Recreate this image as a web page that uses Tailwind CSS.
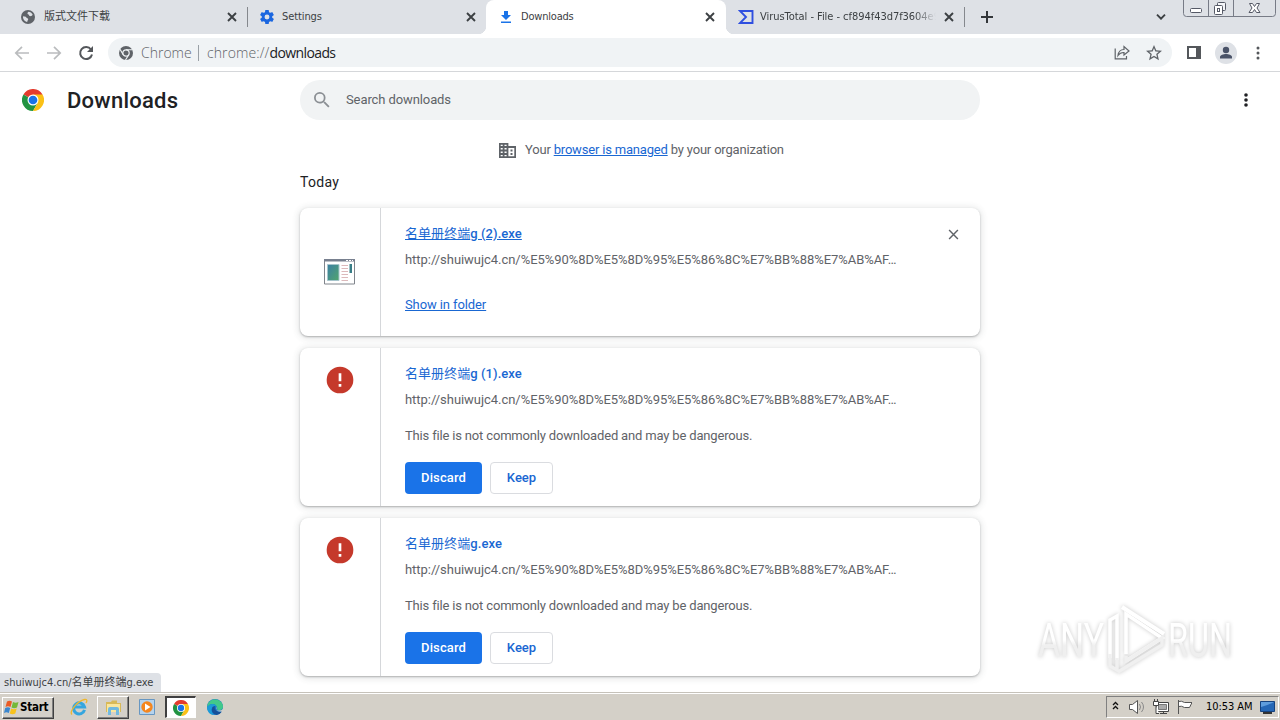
<!DOCTYPE html>
<html lang="en">
<head>
<meta charset="utf-8">
<title>Downloads</title>
<script src="https://cdn.jsdelivr.net/npm/@tailwindcss/browser@4"></script>
</head>
<body class="w-[1280px] h-[720px] overflow-hidden flex flex-col bg-white text-[#5f6368] font-['Roboto','Noto_Sans_CJK_SC',sans-serif]">
<svg width="0" height="0" class="absolute">
  <defs>
    <symbol id="x" viewBox="0 0 10 10"><path d="M1 1L9 9M9 1L1 9" fill="none" stroke="currentColor"/></symbol>
    <symbol id="chrome" viewBox="0 0 48 48">
      <path d="M24 24 3.2 12A24 24 0 0 1 44.8 12Z" fill="#e33b2e"/>
      <path d="M24 24 3.2 12A24 24 0 0 0 24 48L34.4 30Z" fill="#229342"/>
      <path d="M24 12H44.8A24 24 0 0 1 24 48L34.4 30Z" fill="#fbc116"/>
      <circle cx="24" cy="24" r="12" fill="#fff"/><circle cx="24" cy="24" r="9.5" fill="#1a73e8"/>
    </symbol>
    <symbol id="alert" viewBox="0 0 24 24"><path fill="#c5392b" d="M12 2a10 10 0 1 0 0 20 10 10 0 0 0 0-20Z"/><path fill="#fff" d="M11 7h2v6h-2zM11 15h2v2h-2z"/></symbol>
  </defs>
</svg>

<!-- Tab strip -->
<header class="h-[34px] shrink-0 bg-[#dee1e6] flex text-[11px] text-[#3c4043] font-['DejaVu_Sans_Condensed','Noto_Sans_CJK_SC',sans-serif]">
  <div class="w-[248px] h-full flex items-center pl-[21px] pr-[0px]">
    <svg class="size-[14px] shrink-0" viewBox="0 0 14 14"><circle cx="7" cy="7" r="7" fill="#5f6368"/><path d="M2 6.2c1.6.2 3 .2 3.400 1.300.3.9 1.600.5 1.800 1.500.2.9-.9 1.300-1 3-2.500-.5-4.500-2.800-4.200-5.800ZM7.500 1.800c1.700.1 3.300 1.200 4.200 3-.6 1-1.700 1.600-3 1.200-.8-.3-.4-1.200-1.300-1.500C6 4 6.200 2.500 7.500 1.800Z" fill="#dee1e6"/></svg>
    <span class="ml-[9px] flex-1 pt-[1px]">版式文件下载</span>
    <svg class="size-[10px] mr-[10px] stroke-[1.900]"><use href="#x"/></svg>
    <span class="w-px h-[20px] bg-[#85888d]"></span>
  </div>
  <div class="w-[238px] h-full flex items-center pl-[12px] rounded-br-lg">
    <svg class="size-[14px] shrink-0" viewBox="2 2 20 20" fill="#1a66e0"><path d="M19.430 12.980c.04-.32.070-.64.070-.98s-.03-.66-.07-.98l2.110-1.650c.19-.15.240-.42.120-.64l-2-3.460c-.12-.22-.39-.3-.61-.22l-2.490 1c-.52-.4-1.080-.73-1.690-.98l-.38-2.650C14.460 2.180 14.250 2 14 2h-4c-.25 0-.46.180-.49.420l-.38 2.650c-.61.250-1.170.59-1.690.98l-2.490-1c-.23-.09-.49 0-.61.220l-2 3.460c-.13.220-.07.490.12.640l2.110 1.650c-.04.320-.07.650-.07.980s.03.660.07.980l-2.110 1.650c-.19.150-.24.420-.12.640l2 3.460c.12.220.39.300.61.220l2.490-1c.52.400 1.080.73 1.690.98l.38 2.650c.03.240.24.420.49.420h4c.25 0 .46-.18.490-.42l.38-2.650c.61-.25 1.170-.59 1.690-.98l2.490 1c.23.090.49 0 .61-.22l2-3.460c.12-.22.070-.49-.12-.64zM12 15.500a3.500 3.500 0 1 1 0-7 3.500 3.500 0 0 1 0 7Z"/></svg>
    <span class="ml-[8px] flex-1 tracking-[-.1px] pt-[1px]">Settings</span>
    <svg class="size-[10px] mr-[10px] stroke-[1.900]"><use href="#x"/></svg>
  </div>
  <div class="bg-white">
    <div class="w-[240px] h-full flex items-center pl-[14px] bg-white rounded-t-lg relative before:absolute before:-left-2 before:bottom-0 before:size-2 before:bg-[radial-gradient(circle_at_0_0,#dee1e6_8px,#fff_8.500px)] after:absolute after:-right-2 after:bottom-0 after:size-2 after:bg-[radial-gradient(circle_at_100%_0,#dee1e6_8px,#fff_8.500px)] shadow-[0_-8px_0_0_#dee1e6]">
      <svg class="w-[12px] h-[14px] shrink-0" viewBox="0 0 12 14" fill="#1a73e8"><path d="M4 1h4v4h3L6 10 1 5h3zM1 11.500h10V13H1z"/></svg>
      <span class="ml-[9px] flex-1 tracking-[-.2px] pt-[1px]">Downloads</span>
      <svg class="size-[10px] mr-[11px] stroke-[1.900]"><use href="#x"/></svg>
    </div>
  </div>
  <div class="w-[239px] h-full flex items-center pl-[12px]">
    <svg class="w-[16px] h-[14px] shrink-0" viewBox="0 0 15 14" fill="none" stroke="#2f4fe0" stroke-width="1.900"><path d="M1.500 1H14V13H1.500L7.500 7Z"/></svg>
    <span class="ml-[6px] w-[176px] pt-[1px] whitespace-nowrap tracking-[-.04px] [mask-image:linear-gradient(to_right,#000_154px,transparent_176px)]">VirusTotal - File - cf894f43d7f3604e9</span>
    <svg class="size-[10px] ml-[8px] mr-[10px] stroke-[1.900] shrink-0"><use href="#x"/></svg>
    <span class="w-px h-[20px] bg-[#85888d]"></span>
  </div>
  <svg class="size-[12px] ml-[16px] mt-[11px]" viewBox="0 0 12 12" stroke="#33363a" stroke-width="2"><path d="M6 0V12M0 6H12"/></svg>
  <svg class="w-[10px] h-[6px] ml-[163px] mt-[14px]" viewBox="0 0 10 6" fill="none" stroke="#3c4043" stroke-width="1.900"><path d="M1 .7 5 4.700 9 .7"/></svg>
  <svg class="w-[93px] h-[17px] ml-[17px]" viewBox="0 0 93 17" fill="none" stroke="#777b86">
    <path d="M.5 0V13.500Q.5 16.500 3.500 16.500H89.500Q92.500 16.500 92.500 13.500V0M25.500 0V16M50.500 0V16"/>
    <g stroke="#555966"><rect x="7.500" y="8.500" width="11" height="4" rx="1" fill="#fff"/><rect x="34.500" y="2.500" width="8" height="8" rx="1" fill="#f4f5f8"/><rect x="31.500" y="5.500" width="8" height="9" rx="1" fill="#fff"/><rect x="34.500" y="8.500" width="2" height="3"/><path fill="#fff" d="M66.500 3.500h3l2 3 2-3h3L74 8l3 4.500h-3.500l-2-3-2 3h-3.500l3-4.500z"/></g>
  </svg>
</header>

<!-- Toolbar -->
<div class="h-[38px] shrink-0 border-b border-[#d5d7da] flex items-center pl-[14px]">
  <svg class="w-[80px] h-[16px] shrink-0" viewBox="0 0 80 16" fill="none" stroke-width="1.700"><path stroke="#babcbe" d="M15 8H2M8 1.800 1.800 8 8 14.200M33 8H46M40 1.800 46.200 8 40 14.200"/><path stroke="#54575b" stroke-width="2" d="M77 4.500A6 6 0 1 0 78 9.500"/><path fill="#54575b" d="M79 1V7H73z"/></svg>
  <div class="w-[1064px] h-[29px] ml-[14px] shrink-0 rounded-full bg-[#f0f3f5] flex items-center pl-[11px] text-[14px] font-['Open_Sans','Noto_Sans',sans-serif] font-light">
    <svg class="size-[14px]" viewBox="0 0 14 14"><circle cx="7" cy="7" r="7" fill="#5f6368"/><circle cx="7" cy="7" r="3.200" fill="#5f6368" stroke="#f0f3f5" stroke-width="1.200"/><path d="M7 3.700H13.500M4.200 8.600 1 3.200M9.800 8.600 6.500 14" stroke="#f0f3f5" stroke-width="1.100"/></svg>
    <span class="ml-[8px] w-[57px]">Chrome</span>
    <span class="w-px h-[16px] bg-[#9aa0a6]"></span>
    <span class="ml-[8px] flex-1 tracking-[.1px]">chrome://<span class="text-[#202124] font-normal tracking-[-.6px]">downloads</span></span>
    <svg class="w-[16px] h-[15px]" viewBox="0 0 16 15" fill="none" stroke="#5f6368" stroke-width="1.200"><path d="M1.200 3.500V13.800H12.500V11"/><path d="M4 10.500C4.500 6.500 7 4.500 10 4.500V1.500L15 6 10 10V7.500C7.500 7.300 5.500 8.500 4 10.500Z"/></svg>
    <svg class="size-[16px] ml-[16px] mr-[10px]" viewBox="2 2 20 20" fill="#5f6368"><path d="m22 9.240-7.190-.62L12 2 9.190 8.630 2 9.240l5.460 4.730L5.820 21 12 17.270 18.180 21l-1.630-7.030zM12 15.400l-3.760 2.270 1-4.280-3.320-2.880 4.380-.38L12 6.100l1.710 4.040 4.380.38-3.320 2.880 1 4.280z"/></svg>
  </div>
  <svg class="w-[14px] h-[13px] ml-[15px]" viewBox="0 0 14 13"><path fill="#54575b" fill-rule="evenodd" d="M0 0H14V13H0ZM2 2V11H9V2Z"/></svg>
  <svg class="size-[22px] ml-[14px]" viewBox="0 0 22 22"><circle cx="11" cy="11" r="11" fill="#dee1e6"/><circle cx="11" cy="8" r="3.200" fill="#4a5368"/><path fill="#4a5368" d="M5 16.500V15C5 13 8.500 12 11 12s6 1 6 3v1.500z"/></svg>
  <svg class="w-[4px] h-[14px] ml-[19px]" viewBox="0 0 4 14" fill="#54575b"><circle cx="2" cy="2" r="1.500"/><circle cx="2" cy="7" r="1.500"/><circle cx="2" cy="12" r="1.500"/></svg>
</div>

<!-- Downloads page -->
<main class="flex-1 min-h-0 overflow-hidden relative text-[13px]">
  <div class="h-[56px] flex items-center pl-[22px]">
    <svg class="size-[22px]"><use href="#chrome"/></svg>
    <h1 class="ml-[23px] w-[233px] text-[22px] font-medium tracking-[.25px] text-[#202124]">Downloads</h1>
    <div class="w-[680px] h-[40px] rounded-full bg-[#f1f3f4] flex items-center pl-[14px]">
      <svg class="size-[16px]" viewBox="3 3 18 18" fill="#8b8f94"><path d="M15.500 14h-.79l-.28-.27A6.470 6.470 0 0 0 16 9.500 6.500 6.500 0 1 0 9.500 16c1.610 0 3.090-.59 4.230-1.570l.27.280v.79l5 4.990L20.490 19zm-6 0a4.500 4.500 0 1 1 0-9 4.500 4.500 0 0 1 0 9"/></svg>
      <span class="ml-[16px] tracking-[-.1px]">Search downloads</span>
    </div>
    <svg class="w-[4px] h-[14px] ml-[264px]" viewBox="0 0 4 14" fill="#202124"><circle cx="2" cy="2" r="1.800"/><circle cx="2" cy="7" r="1.800"/><circle cx="2" cy="12" r="1.800"/></svg>
  </div>
  <div class="h-[44px] flex items-center pl-[499px]">
    <svg class="w-[17px] h-[15px]" viewBox="0 0 17 15" fill="none" stroke="#5f6368" stroke-width="1.800"><path d="M.8.8H8.500V14.200H.8ZM.8 4H8.500M.8 7.500H8.500M.8 11H8.500M4.600.8V14.200M8.500 4H16.200V14.200H8.500"/><path d="M11.500 7.500H13.500M11.500 11H13.500"/></svg>
    <p class="ml-[9px] tracking-[-.185px]">Your <span class="text-[#1967d2] underline">browser is managed</span> by your organization</p>
  </div>
  <h2 class="ml-[300px] h-[20px] leading-[20px] text-[14px] tracking-[.3px] text-[#202124]">Today</h2>
  <div class="ml-[300px] mt-[16px] w-[680px] flex flex-col gap-[12px]">
    <section class="h-[128px] flex rounded-lg bg-white shadow-[0_1px_2px_rgba(60,64,67,.35),0_1px_6px_2px_rgba(60,64,67,.12)]">
      <div class="w-[81px] border-r border-[#d5d7da] flex items-center justify-center">
        <svg class="w-[32px] h-[26px]" viewBox="0 0 32 26"><defs><linearGradient id="g" x2="1" y2="1"><stop stop-color="#3b7fa3"/><stop offset="1" stop-color="#51a66d"/></linearGradient></defs><path fill="#fff" stroke="#80858c" d="M.5.5H30.500V25H.5z"/><path fill="#78808f" d="M0 0H31V2.500H0z"/><path stroke="#fff" d="M22 1.500h2m1 0h2m1 0h1"/><path fill="url(#g)" stroke="#a6c5cc" d="M3.500 5.500H15V21.500H3.500z"/><path stroke="#dcb9bb" d="M17.500 6.500H24M17.500 9.500H24M17.500 12.500H24M17.500 15.500H24M17.500 18.500H24M17.500 21.500H24"/><path fill="#397e87" d="M25.500 5H28V14H25.500z"/></svg>
      </div>
      <div class="pl-[24px] pt-[16px] flex-1">
        <h3 class="h-[20px] leading-[20px] font-medium tracking-[.06px] text-[#1967d2] underline"><span class="font-normal">名单册终端</span>g (2).exe</h3>
        <p class="mt-[6px] h-[20px] leading-[20px] tracking-[-.045px] whitespace-nowrap">http://shuiwujc4.cn/%E5%90%8D%E5%8D%95%E5%86%8C%E7%BB%88%E7%AB%AF…</p>
        <p class="mt-[25px] h-[20px] leading-[20px] tracking-[-.1px] text-[#1967d2] underline">Show in folder</p>
      </div>
      <svg class="size-[11px] mt-[21px] mr-[21px] stroke-[1.300]"><use href="#x"/></svg>
    </section>
    <section class="h-[158px] flex rounded-lg bg-white shadow-[0_1px_2px_rgba(60,64,67,.35),0_1px_6px_2px_rgba(60,64,67,.12)]">
      <div class="w-[81px] border-r border-[#d5d7da] pt-[16px] flex justify-center"><svg class="size-[32px]"><use href="#alert"/></svg></div>
      <div class="pl-[24px] pt-[16px] flex-1">
        <h3 class="h-[20px] leading-[20px] font-medium tracking-[.06px] text-[#1967d2]"><span class="font-normal">名单册终端</span>g (1).exe</h3>
        <p class="mt-[6px] h-[20px] leading-[20px] tracking-[-.045px] whitespace-nowrap">http://shuiwujc4.cn/%E5%90%8D%E5%8D%95%E5%86%8C%E7%BB%88%E7%AB%AF…</p>
        <p class="mt-[16px] h-[20px] leading-[20px] tracking-[-.17px]">This file is not commonly downloaded and may be dangerous.</p>
        <div class="mt-[16px] flex gap-2 font-medium">
          <button class="w-[77px] h-[32px] rounded bg-[#1a73e8] text-white tracking-[.1px]">Discard</button>
          <button class="w-[63px] h-[32px] rounded border border-[#dadce0] text-[#1967d2]">Keep</button>
        </div>
      </div>
    </section>
    <section class="h-[158px] flex rounded-lg bg-white shadow-[0_1px_2px_rgba(60,64,67,.35),0_1px_6px_2px_rgba(60,64,67,.12)]">
      <div class="w-[81px] border-r border-[#d5d7da] pt-[16px] flex justify-center"><svg class="size-[32px]"><use href="#alert"/></svg></div>
      <div class="pl-[24px] pt-[16px] flex-1">
        <h3 class="h-[20px] leading-[20px] font-medium tracking-[.06px] text-[#1967d2]"><span class="font-normal">名单册终端</span>g.exe</h3>
        <p class="mt-[6px] h-[20px] leading-[20px] tracking-[-.045px] whitespace-nowrap">http://shuiwujc4.cn/%E5%90%8D%E5%8D%95%E5%86%8C%E7%BB%88%E7%AB%AF…</p>
        <p class="mt-[16px] h-[20px] leading-[20px] tracking-[-.17px]">This file is not commonly downloaded and may be dangerous.</p>
        <div class="mt-[16px] flex gap-2 font-medium">
          <button class="w-[77px] h-[32px] rounded bg-[#1a73e8] text-white tracking-[.1px]">Discard</button>
          <button class="w-[63px] h-[32px] rounded border border-[#dadce0] text-[#1967d2]">Keep</button>
        </div>
      </div>
    </section>
  </div>
  <div class="absolute left-0 bottom-0 w-[161px] h-[19px] rounded-tr bg-[#dee1e6] pl-[4px] leading-[20px] text-[11px] whitespace-nowrap text-[#3c4043] font-['DejaVu_Sans_Condensed','Noto_Sans_CJK_SC',sans-serif]">shuiwujc4.cn/名单册终端g.exe</div>
  <!-- ANY.RUN watermark -->
  <svg class="absolute left-[1030px] bottom-[14px] w-[220px] h-[74px] overflow-visible drop-shadow-[0_0_2px_rgba(0,0,0,.22)]" viewBox="0 0 220 74" fill="none" stroke="#fff" stroke-width="3.500">
    <defs><linearGradient id="wm" x2="0" y2="1"><stop offset=".5" stop-color="#fff"/><stop offset=".6" stop-color="#efefef"/></linearGradient></defs>
    <g fill="url(#wm)" stroke="none" font-family="Roboto" font-size="49"><text x="8" y="52.500" textLength="66" lengthAdjust="spacingAndGlyphs">ANY</text><text x="138" y="52.500" textLength="64" lengthAdjust="spacingAndGlyphs">RUN</text></g>
    <path d="M80 54V16L87 12V56M96 50V10L132 34 96 57"/>
    <path d="M92 3 134 30" stroke-width="4"/>
    <path stroke="#f0f0f0" d="M80 50V62L87 66V54M96 52V57L132 34V41L88 68"/>
  </svg>
</main>

<!-- Taskbar -->
<footer class="h-[28px] shrink-0 bg-[#d4d0c8] border-t border-[#c6c2ba] shadow-[inset_0_1px_0_#fff] flex items-center pl-[2px] text-[11px] text-black font-['DejaVu_Sans_Condensed',sans-serif]">
  <div class="w-[52px] h-[22px] mt-[2px] flex items-center pl-[1px] border border-t-white border-l-white border-r-[#404040] border-b-[#404040] shadow-[inset_-1px_-1px_0_#808080] text-[11.500px] font-bold tracking-[-.25px]">
    <svg class="w-[15px] h-[15px] mr-[1px] shrink-0" viewBox="0 0 15 15"><path fill="#ea5b25" d="M3 1.500Q5.500 0 8 1.500L6.500 7Q4 5.500 1.500 7Z"/><path fill="#75b938" d="M9 2Q11.500 3.500 14.500 2L13 7.500Q10 9 7.500 7.500Z"/><path fill="#3b87cf" d="M1.200 8Q4 6.500 6.200 8L4.800 13Q2.500 11.500 0 13Z"/><path fill="#f8c21b" d="M7.200 8.500Q9.500 10 12.700 8.500L11.300 13.500Q8.500 15 5.800 13.500Z"/></svg>
    <span>Start</span>
  </div>
  <svg class="size-[18px] ml-[16px] mt-[1px]" viewBox="0 0 18 18" fill="none"><path stroke="#35a6df" stroke-width="3" d="M14.500 11.800A5.500 5.500 0 1 1 14.500 9H5"/><path stroke="#efb72c" stroke-width="1.300" d="M2 16.500C-1 14 7 3 14.500 1.500 17 1 17.500 2.500 16 5"/></svg>
  <div class="w-[32px] h-[23px] ml-[9px] mt-[2px] flex items-center justify-center border border-t-white border-l-white border-r-[#404040] border-b-[#404040] shadow-[inset_-1px_-1px_0_#808080]">
    <svg class="w-[17px] h-[17px]" viewBox="0 0 17 17"><path fill="#d8b958" d="M1 3H6L7 1.500H12V4H16V13H1z"/><path fill="#fae69d" d="M2 5H15V13H2z"/><path fill="#71b9df" d="M3 16V10Q3 8 5 8H12Q14 8 14 10V16H11V11H6V16z"/></svg>
  </div>
  <svg class="size-[16px] ml-[10px]" viewBox="0 0 16 16"><path fill="#b5d3ed" stroke="#6797c2" d="M.5.5H15.500V15.500H.5z"/><circle cx="8" cy="8" r="5.700" fill="#f4861e"/><path fill="#fff" d="M6 4.500 11.500 8 6 11.500z"/></svg>
  <div class="w-[31px] h-[22px] ml-[10px] mt-[1px] flex items-center justify-center bg-white border border-l-2 border-t-2 border-t-[#404040] border-l-[#404040] border-r-white border-b-white"><svg class="size-[16px]"><use href="#chrome"/></svg></div>
  <svg class="size-[16px] ml-[11px]" viewBox="0 0 16 16"><circle cx="8" cy="8" r="8" fill="#1676c8"/><path fill="#42c88b" d="M2 3A8 8 0 0 1 16 8C16 11 12 12 10 10.500 11 8 9 5 5 5Q3 5 0 8 .2 5 2 3Z"/><path fill="#1c9bd8" d="M0 8Q3 4.500 6 5 9 5.500 9.500 7.500 6 6 4.500 10 4 13 7 16 0 15 0 8Z"/><path fill="#174f98" d="M5.500 8Q3 14 9.500 16 13 15.500 15 12.500 11 14 8.500 11 7 9 8 7Z"/><path fill="#d4d0c8" d="M9.500 7.500Q8 10.500 11 11.500 14 12 16 10V12Q12 13.500 9.500 11z"/></svg>
  <div class="ml-auto mr-[1px] mt-[1px] w-[173px] h-[22px] flex items-center border border-t-[#808080] border-l-[#808080] border-r-white border-b-white pl-[5px]">
    <svg class="w-[80px] h-[16px] shrink-0" viewBox="0 0 80 16" fill="none" stroke="#555"><path stroke="#111" stroke-width="1.300" d="M1 6 3.500 3.500 6 6M1 10 3.500 7.500 6 10"/><path fill="#fff" d="M17.500 5.500H20.500L25.500 1.500V14.500L20.500 10.500H17.500z"/><path stroke="#888" d="M27.500 5Q29.500 8 27.500 11M29.500 3Q33.500 8 29.500 13"/><path fill="#fff" stroke="#444" d="M44.500 3.500H56.500V12.500H44.500z"/><path fill="#aaa" stroke="#777" d="M46.500 5.500H54.500V10.500H46.500z"/><path stroke="#444" d="M48 14.500H55M51.500 12.500V14"/><path fill="#fff" stroke="#444" d="M41.500 2.500H46.500V6.500H41.500zM44 6.500V14.500H47"/><path stroke="#444" d="M42.500 0V2M45.500 0V2"/><path fill="#fff" d="M66.500 1V15M66.500 2.500Q69.500 1.500 72.500 3.500H80L77.500 8.500H72.500Q69.500 6.500 66.500 7.500"/></svg>
    <span class="ml-[14px] w-[54px] pt-[1px] whitespace-nowrap tracking-[-.05px]">10:53 AM</span>
    <svg class="w-[15px] h-[13px] shrink-0" viewBox="0 0 15 13"><path fill="#2567b6" stroke="#16427e" d="M.5.5H14.500V10.500H.5z"/><path fill="#5f9ddd" d="M1 1H14Q9 4 1 6z"/><path fill="#333" d="M3 11H12V13H3z"/></svg>
  </div>
</footer>
</body>
</html>
